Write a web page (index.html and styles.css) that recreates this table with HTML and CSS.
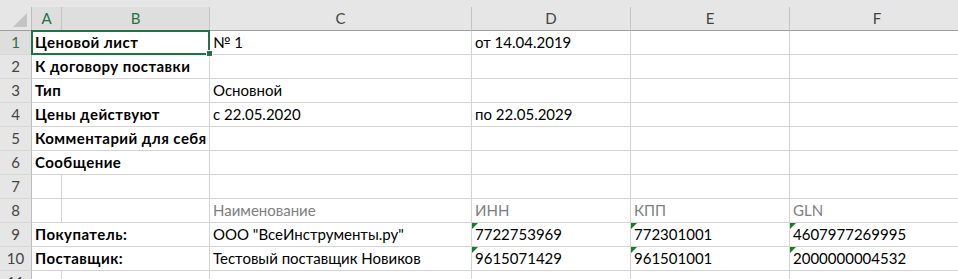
FILE: index.html
```html
<!DOCTYPE html>
<html lang="ru">
<head>
    <meta charset="UTF-8">
    <title>Ценовой лист</title>
    <link rel="stylesheet" href="styles.css">
</head>
<body>

<div class="sheet">
    <div class="grid">
        <!-- column headers -->
        <div class="corner"></div>
        <div class="colhead sel">A</div>
        <div class="colhead sel">B</div>
        <div class="colhead">C</div>
        <div class="colhead">D</div>
        <div class="colhead">E</div>
        <div class="colhead">F</div>

        <!-- 1 -->
        <div class="rowhead sel">1</div>
        <div class="cell wide bold active">Ценовой лист</div>
        <div class="cell">№ 1</div>
        <div class="cell">от 14.04.2019</div>
        <div class="cell"></div>
        <div class="cell"></div>

        <!-- 2 -->
        <div class="rowhead">2</div>
        <div class="cell wide bold">К договору поставки</div>
        <div class="cell"></div>
        <div class="cell"></div>
        <div class="cell"></div>
        <div class="cell"></div>

        <!-- 3 -->
        <div class="rowhead">3</div>
        <div class="cell wide bold">Тип</div>
        <div class="cell">Основной</div>
        <div class="cell"></div>
        <div class="cell"></div>
        <div class="cell"></div>

        <!-- 4 -->
        <div class="rowhead">4</div>
        <div class="cell wide bold">Цены действуют</div>
        <div class="cell">с 22.05.2020</div>
        <div class="cell">по 22.05.2029</div>
        <div class="cell"></div>
        <div class="cell"></div>

        <!-- 5 -->
        <div class="rowhead">5</div>
        <div class="cell wide bold">Комментарий для себя</div>
        <div class="cell"></div>
        <div class="cell"></div>
        <div class="cell"></div>
        <div class="cell"></div>

        <!-- 6 -->
        <div class="rowhead">6</div>
        <div class="cell wide bold">Сообщение</div>
        <div class="cell"></div>
        <div class="cell"></div>
        <div class="cell"></div>
        <div class="cell"></div>

        <!-- 7 -->
        <div class="rowhead">7</div>
        <div class="cell"></div>
        <div class="cell"></div>
        <div class="cell"></div>
        <div class="cell"></div>
        <div class="cell"></div>
        <div class="cell"></div>

        <!-- 8: table captions -->
        <div class="rowhead">8</div>
        <div class="cell"></div>
        <div class="cell"></div>
        <div class="cell muted">Наименование</div>
        <div class="cell muted">ИНН</div>
        <div class="cell muted">КПП</div>
        <div class="cell muted">GLN</div>

        <!-- 9 -->
        <div class="rowhead">9</div>
        <div class="cell wide bold">Покупатель:</div>
        <div class="cell">ООО "ВсеИнструменты.ру"</div>
        <div class="cell text-num">7722753969</div>
        <div class="cell text-num">772301001</div>
        <div class="cell text-num">4607977269995</div>

        <!-- 10 -->
        <div class="rowhead">10</div>
        <div class="cell wide bold">Поставщик:</div>
        <div class="cell">Тестовый поставщик Новиков</div>
        <div class="cell text-num">9615071429</div>
        <div class="cell text-num">961501001</div>
        <div class="cell text-num">2000000004532</div>

        <!-- 11 -->
        <div class="rowhead">11</div>
        <div class="cell"></div>
        <div class="cell"></div>
        <div class="cell"></div>
        <div class="cell"></div>
        <div class="cell"></div>
        <div class="cell"></div>
    </div>
</div>

</body>
</html>
```

FILE: styles.css
```css
body {
    margin: 0;
    overflow: hidden;
    background: #fff;
    font-family: Lato, "Open Sans", sans-serif;
    font-size: 15px;
    color: #000;
}
.sheet {
    padding-top: 7px;
    background: #e6e6e6;
    width: 958px;
    overflow: hidden;
}
.grid {
    display: grid;
    grid-template-columns: 32px 30px 148px 262px 159px 159px 175px;
    grid-auto-rows: 24px;
    width: 965px;
    background: #fff;
}
.corner, .colhead, .rowhead, .cell {
    box-sizing: border-box;
    line-height: 18px;
    padding-top: 2px;
    white-space: nowrap;
}

/* headers */
.corner {
    position: relative;
    background: #e6e6e6;
    border-right: 1px solid #bcbcbc;
    border-bottom: 1px solid #9f9f9f;
}
.corner::after {
    content: "";
    position: absolute;
    left: 13px;
    top: 6px;
    width: 14px;
    height: 14px;
    background: #c4c4c4;
    clip-path: polygon(100% 0, 100% 100%, 0 100%);
}
.colhead {
    background: #e6e6e6;
    border-right: 1px solid #c4c4c4;
    border-bottom: 1px solid #9f9f9f;
    text-align: center;
    color: #444;
}
.rowhead {
    background: #e6e6e6;
    border-right: 1px solid #bcbcbc;
    border-bottom: 1px solid #d8d8d8;
    text-align: center;
    color: #444;
}
.colhead.sel, .rowhead.sel {
    background: #dedede;
    color: #217346;
}

/* cells */
.cell {
    position: relative;
    border-right: 1px solid #d4d4d4;
    border-bottom: 1px solid #d4d4d4;
    padding-left: 3px;
    padding-right: 3px;
}
.wide {
    grid-column: span 2;
}
.bold {
    font-weight: bold;
    letter-spacing: 0.45px;
}
.muted {
    color: #808080;
}
.active::before {
    content: "";
    position: absolute;
    top: -1px;
    left: -1px;
    right: -1px;
    bottom: -1px;
    border: 2px solid #217346;
    z-index: 2;
}
.active::after {
    content: "";
    position: absolute;
    right: -4px;
    bottom: -3px;
    width: 5px;
    height: 5px;
    background: #217346;
    border: 1px solid #fff;
    z-index: 3;
}
/* number stored as text marker */
.text-num::before {
    content: "";
    position: absolute;
    top: 0;
    left: 0;
    width: 6px;
    height: 6px;
    background: #1a7a26;
    clip-path: polygon(0 0, 100% 0, 0 100%);
}
```
